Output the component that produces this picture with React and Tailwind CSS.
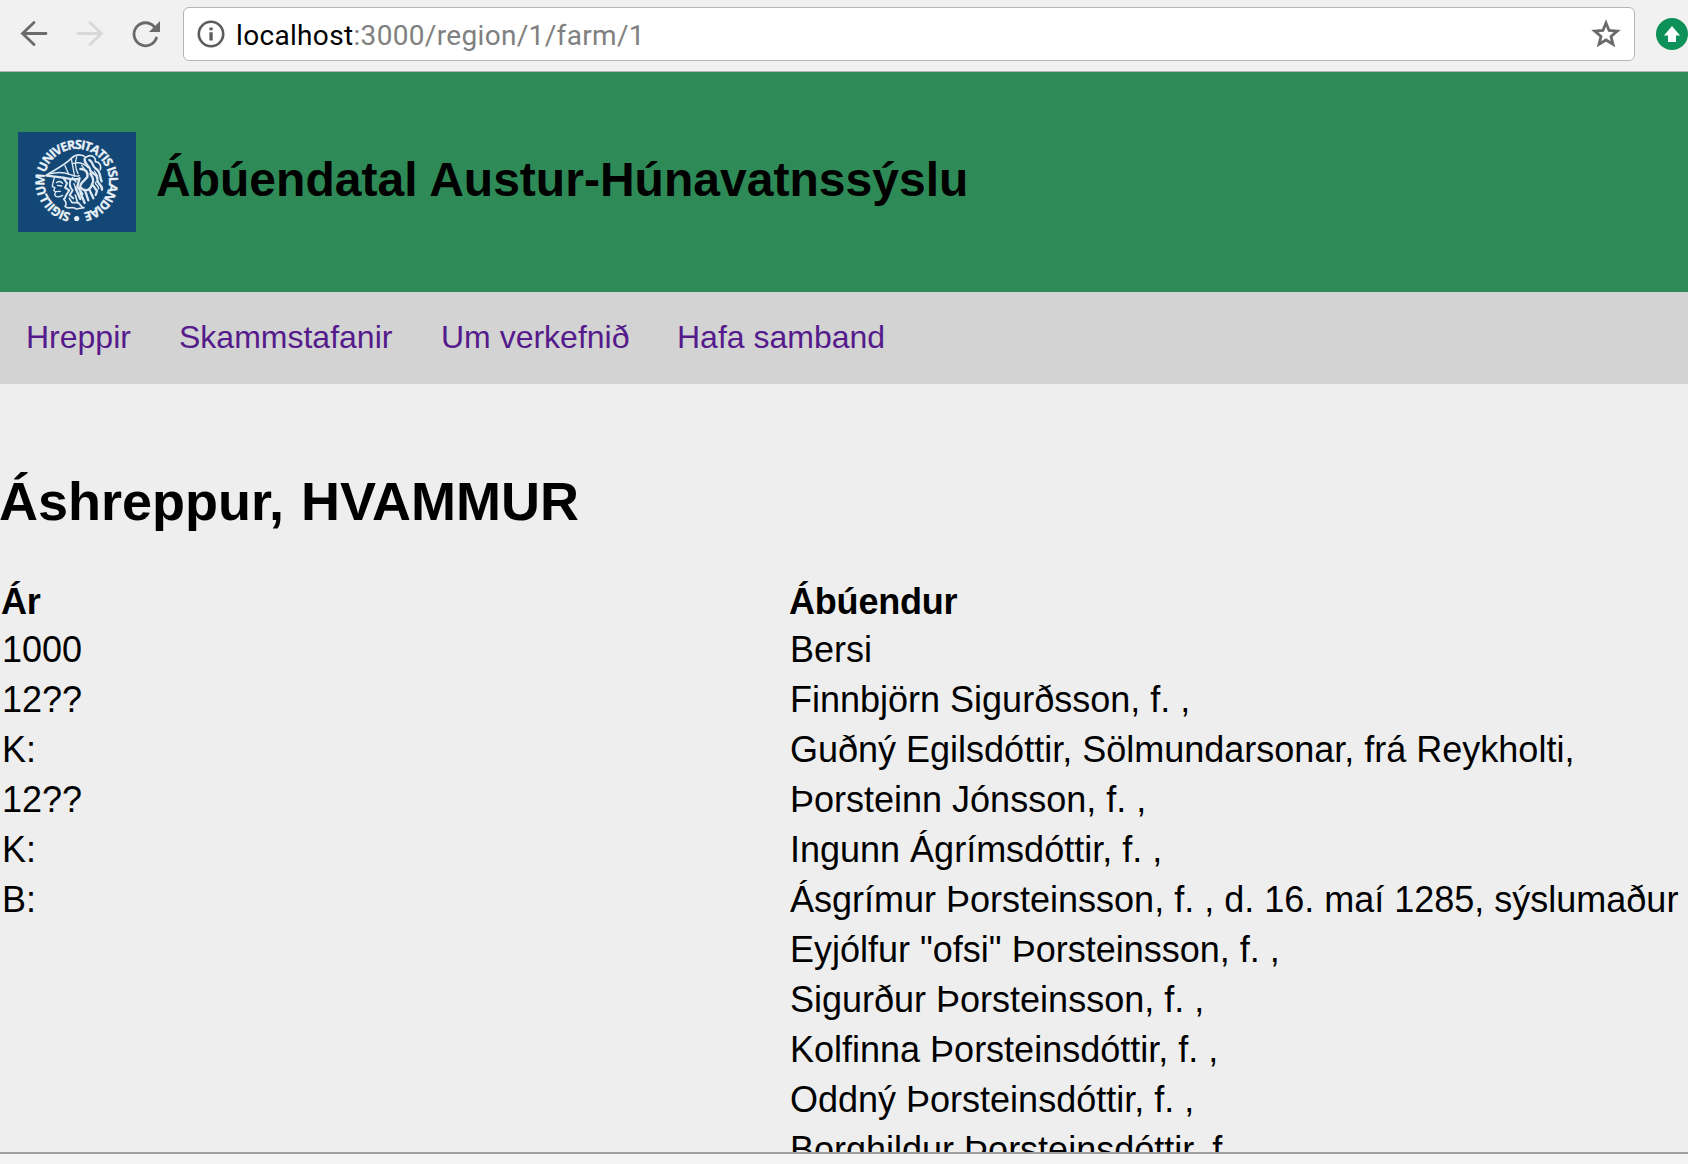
const NAV = [
  { label: "Hreppir", width: "w-[153px]" },
  { label: "Skammstafanir", width: "w-[262px]" },
  { label: "Um verkefnið", width: "w-[236px]" },
  { label: "Hafa samband", width: "w-[220px]" },
];

const ROWS = [
  ["1000", "Bersi"],
  ["12??", "Finnbjörn Sigurðsson, f. ,"],
  ["K:", "Guðný Egilsdóttir, Sölmundarsonar, frá Reykholti,"],
  ["12??", "Þorsteinn Jónsson, f. ,"],
  ["K:", "Ingunn Ágrímsdóttir, f. ,"],
  ["B:", "Ásgrímur Þorsteinsson, f. , d. 16. maí 1285, sýslumaður"],
  ["", 'Eyjólfur "ofsi" Þorsteinsson, f. ,'],
  ["", "Sigurður Þorsteinsson, f. ,"],
  ["", "Kolfinna Þorsteinsdóttir, f. ,"],
  ["", "Oddný Þorsteinsdóttir, f. ,"],
  ["", "Borghildur Þorsteinsdóttir, f. ,"],
];

function Toolbar() {
  return (
    <div className="flex h-[72px] shrink-0 items-start border-b border-[#b4b4b4] bg-[#f1f1f1] pt-[7px]">
      <svg className="h-[54px] w-[183px] shrink-0" viewBox="0 7 183 54" fill="none">
        <g strokeWidth="2.8" strokeLinecap="round">
          <path d="M46 33.5H22.5M34 22.5L22.5 33.5L34 44.5" stroke="#6a6a6a" />
          <path d="M78 33.5H101.5M90 22.5L101.5 33.5L90 44.5" stroke="#d8d8d8" />
          <path d="M156.4 38A11.5 11.5 0 1 1 154.3 26.8" stroke="#6a6a6a" />
        </g>
        <path d="M160 21V32H149Z" fill="#6a6a6a" />
      </svg>
      <div className="flex h-[54px] w-[1452px] shrink-0 items-center rounded-[6px] border border-[#b5b5b5] bg-white pr-[13px] pl-[13px]">
        <svg className="h-[28px] w-[28px] shrink-0" viewBox="0 0 28 28" fill="none">
          <circle cx="14" cy="14" r="12.2" stroke="#5c5c5c" strokeWidth="2.6" />
          <path d="M12.4 12.3H15.7V20.5H12.4ZM12.4 7.5H15.7V10.3H12.4Z" fill="#5c5c5c" />
        </svg>
        <div className="ml-[11px] flex-1 pt-[3px] font-[Roboto,sans-serif] text-[28px] leading-[50px] tracking-[0.33px] whitespace-nowrap text-[#808080]">
          <span className="text-black">localhost</span>:3000/region/1/farm/1
        </div>
        <svg className="h-[30px] w-[30px] shrink-0" viewBox="0 0 30 30" fill="none">
          <path
            d="M15 4L18.1 11.5L26.2 12.1L20 17.4L22 25.3L15 21L8 25.3L10 17.4L3.8 12.1L11.9 11.5Z"
            stroke="#6a6a6a"
            strokeWidth="2.8"
          />
        </svg>
      </div>
      <svg className="mt-[11px] ml-[21px] h-[32px] w-[32px] shrink-0" viewBox="0 0 32 32">
        <circle cx="16" cy="16" r="16" fill="#0d9158" />
        <path d="M16 8L24 17.5H20V24H12V17.5H8Z" fill="#fff" />
      </svg>
    </div>
  );
}

function Seal() {
  return (
    <svg className="h-[100px] w-[118px] shrink-0 bg-[#134775]" viewBox="0 0 118 100">
      <g fill="#e9f1f8" fontFamily="Open Sans, sans-serif" fontWeight="700" fontSize="12.5">
        <path id="ring" d="M58.7 81.5A32.3 32.3 0 0 1 58.7 16.9A32.3 32.3 0 0 1 58.7 81.5" fill="none" />
        <text stroke="#e9f1f8" strokeWidth="0.3">
          <textPath href="#ring" startOffset="6" textLength="190">SIGILLUM UNIVERSITATIS ISLANDIAE</textPath>
        </text>
        <circle cx="58.7" cy="86.5" r="2.6" />
      </g>
      <g transform="translate(12 3) scale(.33333)" fill="none" stroke="#dce8f2" strokeLinecap="round" strokeLinejoin="round">
        <path strokeWidth="5" d="M48 121C75 104 100 93 124 70C138 56 157 58 168 67C182 55 198 66 196 80C211 82 214 93 211 104" />
        <path strokeWidth="7" d="M50 122L93 127C112 129 125 135 145 132" />
        <path strokeWidth="4" d="M56 117C82 110 101 111 119 118C131 123 139 126 148 122M105 92L116 118M124 72L134 124M130 85C150 80 165 88 174 98M140 66C132 88 139 106 144 116" />
        <path strokeWidth="4" d="M73 128C70 139 67 147 67 155L75 158L71 166L77 171L74 178C77 190 90 185 98 181M79 143C87 137 93 139 98 145M82 151L95 153M78 170L91 169" />
        <path strokeWidth="6" d="M101 130L111 145L105 158L118 166L109 180L104 191M122 133C117 146 119 157 128 166L119 181L130 190" />
        <path strokeWidth="7" d="M164 71C161 88 177 89 180 103C182 120 204 112 202 134C200 147 219 150 216 164M178 75C190 81 185 91 196 100C214 110 208 125 215 139" />
        <path strokeWidth="7" d="M151 102C166 101 175 112 172 126C163 139 148 143 151 157C167 173 181 166 187 146C195 132 184 122 181 116M149 129L142 154L157 177M189 151L201 168L197 180M179 166L190 190M166 169L175 196M151 172L164 204M137 160L151 192" />
        <path strokeWidth="5" d="M101 192C109 201 112 207 105 214C115 226 126 211 139 222L162 218M118 190L126 203L144 202L158 218M136 180L143 204" />
        <path strokeWidth="4" d="M199 140C189 148 210 151 205 162M193 108L203 123M132 146L139 166M127 127L138 141M155 91L171 112" />
      </g>
    </svg>
  );
}

export default function App() {
  return (
    <div className="flex h-[1164px] w-[1688px] flex-col overflow-hidden bg-[#eeeeee] font-['Liberation_Sans',Arial,sans-serif] text-black">
      <Toolbar />
      <header className="flex h-[220px] shrink-0 items-center bg-[#2e8b57] pl-[18px]">
        <Seal />
        <h1 className="ml-[20px] pb-[5px] text-[48px] leading-[56px] font-bold tracking-[0.02px] whitespace-nowrap">
          Ábúendatal Austur-Húnavatnssýslu
        </h1>
      </header>
      <nav className="flex h-[92px] shrink-0 items-center bg-[#d3d3d3] pb-[2px] pl-[26px] text-[32px] leading-[36px] text-[#551a8b]">
        {NAV.map((n) => (
          <a key={n.label} className={`${n.width} whitespace-nowrap`}>
            {n.label}
          </a>
        ))}
      </nav>
      <main className="flex min-h-0 flex-1 flex-col overflow-hidden">
        <h2 className="mt-[85px] -ml-px shrink-0 text-[54px] leading-[64px] font-bold [word-spacing:2px]">Áshreppur, HVAMMUR</h2>
        <div className="mt-[46px] grid shrink-0 grid-cols-[788px_1fr] pl-[2px] text-[36px] whitespace-nowrap">
          <div className="-ml-px h-[46px] leading-[46px] font-bold tracking-[-0.2px]">Ár</div>
          <div className="-ml-px h-[46px] leading-[46px] font-bold tracking-[-0.2px]">Ábúendur</div>
          {ROWS.map(([year, name]) => (
            <div key={name} className="col-span-2 grid h-[50px] grid-cols-subgrid leading-[50px]">
              <div>{year}</div>
              <div>{name}</div>
            </div>
          ))}
        </div>
      </main>
      <footer className="h-[12px] shrink-0 border-t-2 border-[#a0a0a0] bg-[#f3f3f3]" />
    </div>
  );
}
